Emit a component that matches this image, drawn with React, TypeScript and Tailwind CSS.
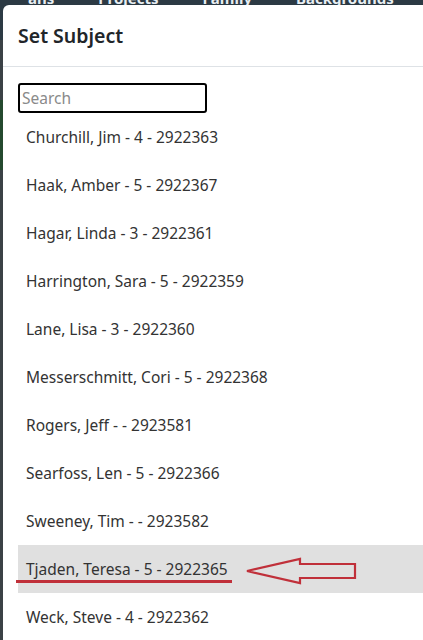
import React from "react";

const subjects = [
  "Churchill, Jim - 4 - 2922363",
  "Haak, Amber - 5 - 2922367",
  "Hagar, Linda - 3 - 2922361",
  "Harrington, Sara - 5 - 2922359",
  "Lane, Lisa - 3 - 2922360",
  "Messerschmitt, Cori - 5 - 2922368",
  "Rogers, Jeff - - 2923581",
  "Searfoss, Len - 5 - 2922366",
  "Sweeney, Tim - - 2923582",
  "Tjaden, Teresa - 5 - 2922365",
  "Weck, Steve - 4 - 2922362",
];

const selected = "Tjaden, Teresa - 5 - 2922365";

function Arrow() {
  return (
    <svg
      className="absolute left-[227px] top-[12px]"
      width="116"
      height="28"
      viewBox="0 0 116 28"
      fill="none"
    >
      <path
        d="M2 14 L55 2 L55 7 L110 7 L110 21 L55 21 L55 26 Z"
        stroke="#c0303a"
        strokeWidth="2.2"
        strokeLinejoin="miter"
      />
    </svg>
  );
}

export default function App() {
  return (
    <div
      className="relative h-[640px] w-[423px] overflow-hidden bg-[#3b4146]"
      style={{ fontFamily: '"Noto Sans", "Open Sans", sans-serif' }}
    >
      {/* page behind the dialog */}
      <nav className="flex h-[40px] items-end gap-[44px] bg-[#2c3a44] px-[28px] pb-[34px] text-[15px] font-bold leading-none text-[#e8eef2]">
        <span>ans</span>
        <span>Projects</span>
        <span>Family</span>
        <span>Backgrounds</span>
        <span>Create</span>
      </nav>
      <div className="mt-[60px] h-[70px] w-[10px] bg-[#24492f]" />

      {/* dialog */}
      <div className="absolute left-[3px] top-[5px] right-[-12px] bottom-[-20px] overflow-hidden rounded-tl-[6px] bg-white">
        <div className="flex h-[62px] items-center border-b border-[#dee2e6] px-[15px] pt-[1px]">
          <h2 className="text-[19.5px] font-semibold text-[#212529]">Set Subject</h2>
        </div>
        <div className="px-[15px] pt-[16px]">
          <input
            placeholder="Search"
            className="h-[30px] w-[189px] rounded-[3px] border-2 border-black px-[2px] text-[15.5px] text-[#212529] placeholder:text-[#8a8a8a] outline-none"
          />
          <ul className="-mr-[15px]">
            {subjects.map((s) => {
              const active = s === selected;
              return (
                <li
                  key={s}
                  className={`relative flex h-[48px] items-center pl-[8px] pt-[1px] text-[15.5px] text-[#333] ${
                    active ? "bg-[#e0e0e0]" : ""
                  }`}
                >
                  {s}
                  {active && (
                    <>
                      <span className="absolute left-[-2px] top-[35px] h-[2.5px] w-[216px] bg-[#c0303a]" />
                      <Arrow />
                    </>
                  )}
                </li>
              );
            })}
          </ul>
        </div>
      </div>
    </div>
  );
}
